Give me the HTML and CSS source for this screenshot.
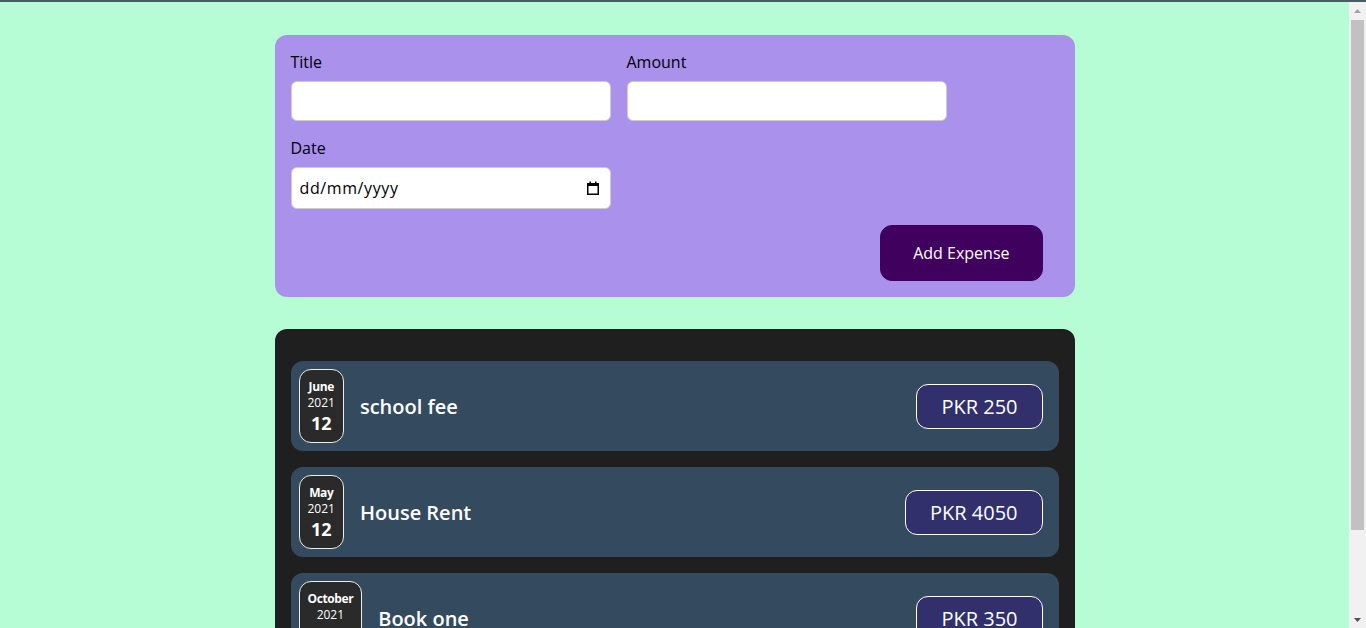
FILE: index.html
```html
<!DOCTYPE html>
<html lang="en">
<head>
<meta charset="utf-8">
<title>Expense Tracker</title>
<link rel="stylesheet" href="styles.css">
</head>
<body>
<div class="topbar"></div>
<div class="window">
  <div class="viewport">
    <div id="root">
      <div class="new-expense">
        <form>
          <div class="controls">
            <div class="control">
              <label>Title</label>
              <input type="text">
            </div>
            <div class="control">
              <label>Amount</label>
              <input type="number">
            </div>
            <div class="control">
              <label>Date</label>
              <div class="date-field">
                <input type="text" class="date-input" placeholder="dd/mm/yyyy">
                <svg class="cal-icon" width="12" height="14" viewBox="0 0 12 14" aria-hidden="true">
                  <rect x="0.75" y="2.75" width="10.5" height="10.5" fill="none" stroke="#000" stroke-width="1.5"/>
                  <rect x="0" y="2" width="12" height="3" fill="#000"/>
                  <rect x="2.5" y="0.5" width="1.5" height="2" fill="#000"/>
                  <rect x="8" y="0.5" width="1.5" height="2" fill="#000"/>
                </svg>
              </div>
            </div>
          </div>
          <div class="actions">
            <button type="button">Add Expense</button>
          </div>
        </form>
      </div>

      <div class="expenses">
        <div class="item">
          <div class="date">
            <div class="month">June</div>
            <div class="year">2021</div>
            <div class="day">12</div>
          </div>
          <div class="desc">
            <h2>school fee</h2>
            <div class="price">PKR 250</div>
          </div>
        </div>
        <div class="item">
          <div class="date">
            <div class="month">May</div>
            <div class="year">2021</div>
            <div class="day">12</div>
          </div>
          <div class="desc">
            <h2>House Rent</h2>
            <div class="price">PKR 4050</div>
          </div>
        </div>
        <div class="item">
          <div class="date">
            <div class="month">October</div>
            <div class="year">2021</div>
            <div class="day">12</div>
          </div>
          <div class="desc">
            <h2>Book one</h2>
            <div class="price">PKR 350</div>
          </div>
        </div>
      </div>
    </div>
  </div>
  <div class="scrollbar" aria-hidden="true">
    <div class="sb-btn">
      <svg width="7" height="4" viewBox="0 0 7 4"><polygon points="3.5,0 7,4 0,4" fill="#a3a3a3"/></svg>
    </div>
    <div class="sb-track">
      <div class="sb-thumb"></div>
    </div>
    <div class="sb-btn">
      <svg width="7" height="4" viewBox="0 0 7 4"><polygon points="0,0 7,0 3.5,4" fill="#505050"/></svg>
    </div>
  </div>
</div>
</body>
</html>
```

FILE: styles.css
```css
* { box-sizing: border-box; }

html {
  font-family: "Open Sans", "Noto Sans", sans-serif;
  overflow: hidden;
}

body {
  margin: 0;
  background-color: #b6fdd5;
}

.topbar {
  height: 2px;
  background-color: #4b5b62;
}

.window {
  display: flex;
  height: calc(100vh - 2px);
}

.viewport {
  flex: 1;
  min-width: 0;
  overflow: hidden;
}

.scrollbar {
  width: 17px;
  flex: none;
  display: flex;
  flex-direction: column;
  background-color: #f1f1f1;
}

.sb-btn {
  height: 17px;
  flex: none;
  display: flex;
  align-items: center;
  justify-content: center;
}

.sb-track {
  flex: 1;
  padding: 1px 2px 0;
}

.sb-thumb {
  height: 510px;
  background-color: #c1c1c1;
}

#root {
  padding-top: 1px;
  padding-bottom: 1px;
}

.new-expense {
  background-color: #a991ec;
  padding: 1rem;
  margin: 32px auto;
  width: 50rem;
  max-width: 95%;
  border-radius: 12px;
}

.controls {
  display: flex;
  flex-wrap: wrap;
  gap: 1rem;
  margin-bottom: 1rem;
}

.control label {
  display: block;
  font-weight: 500;
  font-size: 16px;
  margin-bottom: 0.5rem;
  color: #000;
}

.control input {
  display: block;
  font: inherit;
  color: #000;
  padding: 0.5rem;
  border-radius: 6px;
  border: 1px solid #ccc;
  width: 20rem;
  max-width: 100%;
  background: #fff;
  outline: none;
}

.date-field {
  position: relative;
  width: 20rem;
}

.control .date-input {
  height: 42px;
  padding: 0.5rem 0.5rem;
  letter-spacing: 0.6px;
}

.date-input::placeholder {
  color: #000;
  opacity: 1;
}

.cal-icon {
  position: absolute;
  right: 12px;
  top: 14px;
}

.actions {
  text-align: right;
}

.actions button {
  font: inherit;
  padding: 1rem 2rem;
  border: 1px solid #40005d;
  background-color: #40005d;
  color: #fff;
  border-radius: 12px;
  margin-right: 1rem;
}

.expenses {
  padding: 0 1rem 1rem;
  background-color: #1f1f1f;
  margin: 32px auto;
  width: 50rem;
  max-width: 95%;
  border-radius: 12px;
}

.expenses::before {
  content: "";
  display: block;
  height: 16px;
}

.item {
  display: flex;
  align-items: center;
  padding: 0.5rem;
  margin: 1rem 0;
  border-radius: 12px;
  background-color: #344a5f;
}

.date {
  display: flex;
  flex-direction: column;
  align-items: center;
  justify-content: center;
  padding: 9px 8px 7px;
  border: 1px solid #ececec;
  background-color: #2a2a2a;
  color: #fff;
  border-radius: 12px;
}

.month {
  font-size: 12px;
  font-weight: 700;
  line-height: 16px;
  letter-spacing: -0.4px;
}

.year {
  font-size: 12px;
  line-height: 16px;
}

.day {
  font-size: 18px;
  font-weight: 700;
  line-height: 24px;
}

.desc {
  display: flex;
  align-items: center;
  flex: 1;
}

.desc h2 {
  flex: 1;
  margin: 0 1rem;
  font-size: 1.25rem;
  font-weight: 600;
  color: #fff;
}

.price {
  font-size: 1.25rem;
  color: #fff;
  background-color: #31306c;
  border: 1px solid #fff;
  padding: 0.5rem 1.5rem;
  border-radius: 12px;
  margin-right: 8px;
}
```
